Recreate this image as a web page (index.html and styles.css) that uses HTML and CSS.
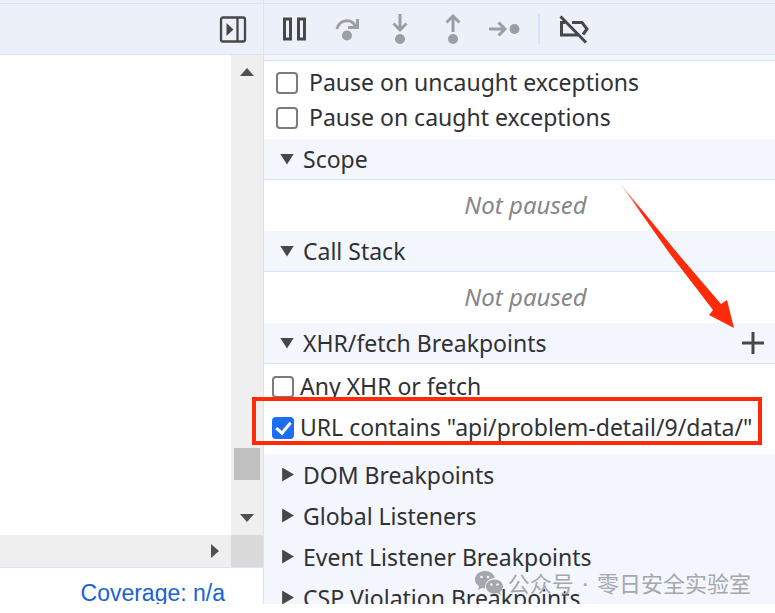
FILE: index.html
```
<!DOCTYPE html>
<html lang="en">
<head>
<meta charset="utf-8">
<title>Debugger</title>
<link rel="stylesheet" href="styles.css">
</head>
<body>
<div class="app">
  <section class="editor">
    <div class="strip"></div>
    <header class="toolbar toolbar-left">
      <button class="tool" aria-label="Toggle debugger sidebar">
        <svg width="28" height="28" viewBox="0 0 28 28" fill="none" stroke="#474747" stroke-width="2.3"><rect x="2" y="2.500" width="24" height="24" rx="2"/><path d="M18.500 2.500v24"/><path d="M7.500 8l7 6.500-7 6.500z" fill="#474747" stroke="none"/></svg>
      </button>
    </header>
    <div class="viewport">
      <div class="code"></div>
      <div class="scroll-y">
        <svg width="14" height="8" viewBox="0 0 14 8"><path d="M0 8L7 0l7 8z" fill="#505050"/></svg>
        <div class="thumb"></div>
        <svg width="14" height="8" viewBox="0 0 14 8"><path d="M0 0h14L7 8z" fill="#505050"/></svg>
      </div>
      <div class="scroll-x">
        <svg width="8" height="14" viewBox="0 0 8 14"><path d="M0 0l8 7-8 7z" fill="#505050"/></svg>
      </div>
      <div class="corner"></div>
    </div>
    <footer class="status"><a href="#coverage">Coverage: n/a</a></footer>
  </section>
  <section class="sidebar">
    <div class="strip"></div>
    <header class="toolbar toolbar-right">
      <div class="tools">
        <button class="tool" aria-label="Pause">
          <svg width="28" height="32" viewBox="0 0 28 32" fill="none" stroke="#474747" stroke-width="3"><rect x="4.500" y="6" width="6" height="20"/><rect x="18.500" y="6" width="6" height="20"/></svg>
        </button>
        <button class="tool" aria-label="Step over">
          <svg width="28" height="32" viewBox="0 0 28 32" fill="none" stroke="#9c9ea2" stroke-width="3"><path d="M4 16C6 7 18 4 23 14M24.500 6v8.500H15"/><circle cx="14" cy="22.500" r="5" fill="#9c9ea2" stroke="none"/></svg>
        </button>
        <button class="tool" aria-label="Step into">
          <svg width="28" height="32" viewBox="0 0 28 32" fill="none" stroke="#9c9ea2" stroke-width="3"><path d="M14 1v16M7.500 10.500L14 17l6.500-6.500"/><circle cx="14" cy="26" r="5" fill="#9c9ea2" stroke="none"/></svg>
        </button>
        <button class="tool" aria-label="Step out">
          <svg width="28" height="32" viewBox="0 0 28 32" fill="none" stroke="#9c9ea2" stroke-width="3"><path d="M14 19V3M7.500 9.500L14 3l6.500 6.500"/><circle cx="14" cy="26" r="5" fill="#9c9ea2" stroke="none"/></svg>
        </button>
        <button class="tool" aria-label="Step">
          <svg width="28" height="32" viewBox="0 0 28 32" fill="none" stroke="#9c9ea2" stroke-width="3" overflow="visible"><path d="M-3 16h15M6.500 9.500L13 16l-6.500 6.500"/><circle cx="22.500" cy="16" r="5" fill="#9c9ea2" stroke="none"/></svg>
        </button>
      </div>
      <span class="divider"></span>
      <button class="tool" aria-label="Deactivate breakpoints">
        <svg width="32" height="32" viewBox="0 0 32 32" fill="none" stroke="#474747" stroke-width="3"><path d="M2.500 3.500L28 29.500M7 9.500H3.500v12.500H20M14 9.500h10l5 6.500-4 5.500"/></svg>
      </button>
    </header>
    <div class="panes">
      <div class="pause-options">
        <label class="check"><input type="checkbox"><span>Pause on uncaught exceptions</span></label>
        <label class="check"><input type="checkbox"><span>Pause on caught exceptions</span></label>
      </div>
      <button class="section open" aria-expanded="true"><i class="down"></i>Scope</button>
      <p class="empty">Not paused</p>
      <button class="section open" aria-expanded="true"><i class="down"></i>Call Stack</button>
      <p class="empty">Not paused</p>
      <div class="section-row">
        <button class="section open" aria-expanded="true"><i class="down"></i>XHR/fetch Breakpoints</button>
        <button class="add" aria-label="Add breakpoint"><svg width="24" height="24" viewBox="0 0 24 24" stroke="#474747" stroke-width="3"><path d="M12 1v22M1 12h22"/></svg></button>
      </div>
      <div class="breakpoints">
        <label class="check"><input type="checkbox"><span>Any XHR or fetch</span></label>
        <label class="check"><input type="checkbox" checked><span>URL contains "api/problem-detail/9/data/"</span></label>
      </div>
      <button class="section" aria-expanded="false"><i class="right"></i>DOM Breakpoints</button>
      <button class="section" aria-expanded="false"><i class="right"></i>Global Listeners</button>
      <button class="section" aria-expanded="false"><i class="right"></i>Event Listener Breakpoints</button>
      <button class="section" aria-expanded="false"><i class="right"></i>CSP Violation Breakpoints</button>
    </div>
  </section>
  <div class="highlight"></div>
  <svg class="arrow" width="116" height="148" viewBox="0 0 116 148"><defs><linearGradient id="fade" x1="0" y1="0" x2="0.200" y2="0.200"><stop offset="0" stop-color="#ff2a08" stop-opacity="0.200"/><stop offset="1" stop-color="#ff2a08"/></linearGradient></defs><path d="M0 0L60 73 102 122l6-4 7 28-25-13 4-5L51 72z" fill="url(#fade)"/></svg>
  <div class="watermark">
    <svg width="30" height="26" viewBox="0 0 30 26" fill="#a5a7ac"><path d="M11 1C5 1 1 4.800 1 9.500c0 3 1.500 5 4 6.700L4 20l4-2 3 .500C11 12 15 8 21 8 20 4 16 1 11 1z"/><path d="M20.500 9.500c-5 0-8.500 3.200-8.500 7s3.500 7 8.500 7l3-.500 3.500 2-1-3c2-1.500 3-3.300 3-5.500 0-3.800-3.500-7-8.500-7z"/><g fill="#f3f6fd"><circle cx="7.500" cy="7" r="1.300"/><circle cx="14" cy="7" r="1.300"/><circle cx="17.500" cy="14.500" r="1.200"/><circle cx="23.500" cy="14.500" r="1.200"/></g></svg>
    <span lang="zh">公众号<span class="dot"> · </span>零日安全实验室</span>
  </div>
</div>
</body>
</html>
```
FILE: styles.css
```
*, *::before { box-sizing: border-box; }
body {
  margin: 0;
  background: #fff;
  color: #303134;
  font-family: "Noto Sans", "Open Sans", sans-serif;
  font-size: 23px;
  line-height: 32px;
}
button {
  border: 0;
  padding: 0;
  background: none;
  color: inherit;
  font: inherit;
}
svg { display: block; }
.app {
  position: relative;
  display: grid;
  grid-template-columns: 264px minmax(0, 1fr);
  height: calc(100vh - 9px);
  overflow: hidden;
}
.editor, .sidebar {
  display: flex;
  flex-direction: column;
  min-width: 0;
  min-height: 0;
}
.editor { border-right: 1px solid #d6e3fb; }
.strip { flex: none; height: 3px; background: #ecf0f9; }
.toolbar {
  flex: none;
  display: flex;
  align-items: center;
  height: 52px;
  border-top: 1px solid #d6e3fb;
  border-bottom: 1px solid #d6e3fb;
  background: #ecf0f9;
}
.toolbar-left { justify-content: flex-end; padding-right: 16px; }
.toolbar-right { gap: 18px; padding-left: 16px; }
.tools { display: flex; gap: 25px; }
.divider { width: 2px; height: 30px; background: #d6e3fb; }
.viewport {
  flex: 1;
  min-height: 0;
  display: grid;
  grid-template-columns: 1fr 32px;
  grid-template-rows: 1fr 32px;
}
.scroll-y {
  display: flex;
  flex-direction: column;
  align-items: center;
  padding: 13px 0;
  background: #efefef;
}
.thumb { width: 26px; height: 32px; margin-top: auto; margin-bottom: 34px; background: #c0c0c0; }
.scroll-x {
  display: flex;
  align-items: center;
  justify-content: flex-end;
  padding-right: 12px;
  background: #efefef;
}
.corner { background: #dadada; }
.status {
  flex: none;
  height: 37px;
  padding: 9px 38px 0 0;
  border-top: 1px solid #d6e3fb;
  text-align: right;
  font-family: "Liberation Sans", sans-serif;
}
.status a { color: #1a62d6; text-decoration: none; }
.panes {
  flex: 1;
  min-height: 0;
  overflow: hidden;
  padding-top: 5px;
  background: #f3f6fd;
}
.pause-options {
  padding: 4px 12px;
  border-top: 1px solid #d6e3fb;
  background: #fff;
}
.check { display: flex; align-items: center; height: 35px; white-space: nowrap; }
.check span { padding-bottom: 2px; }
.pause-options .check { gap: 11px; }
.check input {
  flex: none;
  appearance: none;
  width: 22px;
  height: 22px;
  margin: 0;
  border: 2px solid #7c7c7c;
  border-radius: 4px;
  background: #fff;
}
.check input:checked {
  display: grid;
  place-items: center;
  border-color: #1b6ef3;
  background: #1b6ef3;
}
.check input:checked::before {
  content: "";
  width: 9px;
  height: 15px;
  margin-bottom: 3px;
  border: solid #fff;
  border-width: 0 3px 3px 0;
  transform: rotate(40deg);
}
.section {
  display: flex;
  align-items: center;
  gap: 9px;
  width: 100%;
  height: 41px;
  padding-left: 16px;
  text-align: left;
  white-space: nowrap;
}
.open { border-bottom: 1px solid #d6e3fb; }
.down, .right { flex: none; width: 14px; background: #474747; }
.down { height: 11px; clip-path: polygon(0 0, 100% 0, 50% 100%); }
.right { height: 14px; clip-path: polygon(15% 0, 100% 50%, 15% 100%); }
.empty {
  height: 51px;
  margin: 0;
  padding: 9px 0 9px 12px;
  background: #fff;
  color: #85878a;
  font-size: 24px;
  font-style: italic;
  text-align: center;
}
.section-row { position: relative; }
.add { position: absolute; right: 10px; top: 8px; }
.breakpoints { padding: 2px 8px 6px; background: #fff; }
.breakpoints .check { gap: 6px; height: 41px; }
.highlight {
  position: absolute;
  left: 252px;
  right: 13px;
  top: 397px;
  height: 48px;
  border: 4px solid #ff2a08;
}
.arrow { position: absolute; right: 40px; top: 182px; }
.watermark {
  position: absolute;
  right: 24px;
  bottom: 5px;
  display: flex;
  align-items: center;
  gap: 4px;
  color: #a5a7ac;
  font-family: "Noto Sans CJK SC", sans-serif;
  font-size: 22px;
  white-space: nowrap;
}
.dot { padding: 0 3px; font-family: "Noto Sans", sans-serif; }
```
